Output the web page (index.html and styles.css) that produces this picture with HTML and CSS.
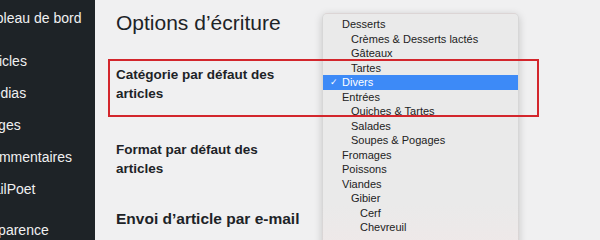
FILE: index.html
```html
<!DOCTYPE html>
<html lang="fr">
<head>
    <meta charset="UTF-8">
    <meta name="viewport" content="width=device-width, initial-scale=1.0">
    <title>Options d’écriture</title>
    <link rel="stylesheet" href="styles.css">
</head>
<body>
    <div class="admin">
        <nav class="sidebar">
            <ul class="menu">
                <li>Tableau de bord</li>
                <li class="sep">Articles</li>
                <li>Médias</li>
                <li>Pages</li>
                <li>Commentaires</li>
                <li>MailPoet</li>
                <li class="sep-2">Apparence</li>
            </ul>
        </nav>

        <main class="content">
            <h1>Options d’écriture</h1>
            <div class="field field-category">Catégorie par défaut des<br>articles</div>
            <div class="field field-format">Format par défaut des<br>articles</div>
            <h2>Envoi d’article par e-mail</h2>
        </main>
    </div>

    <ul class="dropdown">
        <li>Desserts</li>
        <li class="lvl1">Crèmes &amp; Desserts lactés</li>
        <li class="lvl1">Gâteaux</li>
        <li class="lvl1">Tartes</li>
        <li class="selected"><span class="check">✓</span>Divers</li>
        <li>Entrées</li>
        <li class="lvl1">Quiches &amp; Tartes</li>
        <li class="lvl1">Salades</li>
        <li class="lvl1">Soupes &amp; Pogages</li>
        <li>Fromages</li>
        <li>Poissons</li>
        <li>Viandes</li>
        <li class="lvl1">Gibier</li>
        <li class="lvl2">Cerf</li>
        <li class="lvl2">Chevreuil</li>
    </ul>

    <div class="highlight-box"></div>
</body>
</html>
```

FILE: styles.css
```css
body {
    margin: 0;
    padding: 0;
    font-family: "Liberation Sans", Arial, sans-serif;
    background-color: #f0f0f1;
    color: #1d2327;
    position: relative;
    height: 240px;
    overflow: hidden;
}

.admin {
    display: flex;
    height: 240px;
}

.sidebar {
    width: 95px;
    flex-shrink: 0;
    background-color: #1e2327;
    overflow: hidden;
}

/* menu is scrolled off to the left in the capture */
.menu {
    list-style: none;
    margin: 2px 0 0 -19px;
    padding: 0;
    white-space: nowrap;
}

.menu li {
    height: 32px;
    line-height: 32px;
    font-size: 14px;
    color: #f0f0f1;
}

.menu .sep {
    margin-top: 11px;
}

.menu .sep-2 {
    margin-top: 9px;
}

.content {
    flex: 1;
    padding: 9px 0 0 21px;
}

h1 {
    margin: 0;
    font-size: 21px;
    line-height: 28px;
    font-weight: normal;
    color: #1d2327;
}

.field {
    font-size: 13.5px;
    font-weight: bold;
    line-height: 19px;
}

.field-category {
    margin-top: 28px;
}

.field-format {
    margin-top: 37px;
}

h2 {
    margin: 31px 0 0;
    font-size: 15.5px;
    line-height: 20px;
    font-weight: bold;
}

/* open select menu */
.dropdown {
    position: absolute;
    left: 322px;
    top: 13px;
    width: 197px;
    height: 240px;
    margin: 0;
    padding: 3px 0 0;
    list-style: none;
    background: linear-gradient(#eaeaea 80%, #efe8e8);
    border: 1px solid rgba(0, 0, 0, 0.08);
    border-radius: 5px;
    box-shadow: 0 2px 8px rgba(0, 0, 0, 0.18);
    box-sizing: border-box;
    font-size: 11px;
    color: #222;
}

.dropdown li {
    height: 14.5px;
    line-height: 14.5px;
    padding-left: 19px;
    position: relative;
}

.dropdown .lvl1 {
    padding-left: 28px;
}

.dropdown .lvl2 {
    padding-left: 37px;
}

.dropdown .selected {
    background-color: #3d8af7;
    color: #fff;
}

.check {
    position: absolute;
    left: 7px;
    font-size: 9px;
}

.highlight-box {
    position: absolute;
    left: 108px;
    top: 59px;
    width: 431px;
    height: 58px;
    border: 2px solid #d3262c;
    box-sizing: border-box;
}
```
